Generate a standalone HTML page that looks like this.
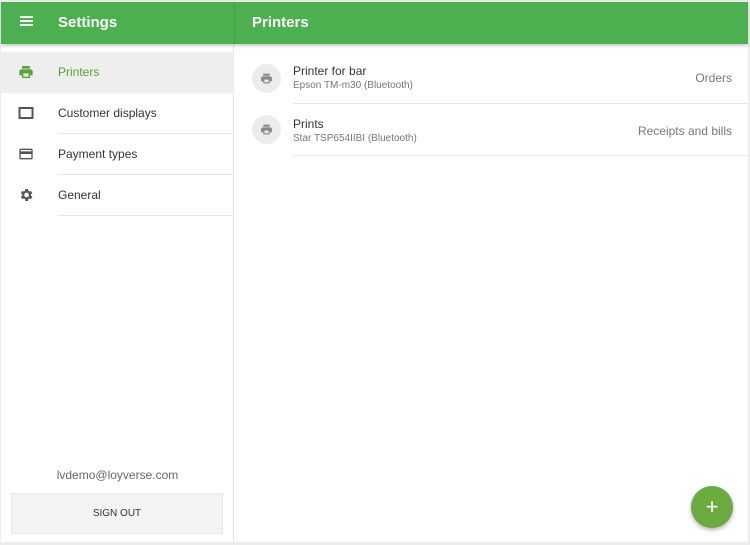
<!DOCTYPE html>
<html><head><meta charset="utf-8"><style>
*{margin:0;padding:0;box-sizing:border-box}
body{width:750px;height:545px;background:#ececec;font-family:"Liberation Sans",Arial,sans-serif;position:relative;overflow:hidden}
.frame{position:absolute;left:1px;top:2px;width:747px;height:540px;background:#fff}
.hdr{position:absolute;left:0;top:0;width:747px;height:42px;background:#4caf50;box-shadow:0 2px 3px rgba(0,0,0,.2);z-index:2;color:#fff;font-size:15px;font-weight:bold}
.side{position:absolute;left:0;top:42px;width:233px;height:498px;border-right:1px solid #e2e2e2}
.row{position:absolute;left:0;width:233px;height:41px;font-size:12px;color:#333}
.row span{position:absolute;left:57px;top:13px}
.row .line{position:absolute;left:57px;right:0;bottom:0;height:1px;background:#e6e6e6}
.row svg{position:absolute;left:17px;top:12px}
.item{position:absolute;left:234px;width:513px;height:52px}
.circ{position:absolute;left:17px;width:29px;height:29px;border-radius:50%;background:#ececec}
.t1{position:absolute;left:58px;font-size:12px;color:#333}
.t2{position:absolute;left:58px;font-size:10px;color:#777}
.rt{position:absolute;right:16px;font-size:12px;color:#777}
.sep{position:absolute;left:58px;right:0;height:1px;background:#e6e6e6}
</style></head><body>
<div class="frame">
<div class="hdr">
 <div style="position:absolute;left:19px;top:14px;width:13px;height:2px;background:#fff;box-shadow:0 4px 0 #fff,0 8px 0 #fff"></div>
 <div style="position:absolute;left:57px;top:12px">Settings</div>
 <div style="position:absolute;left:233px;top:0;width:1px;height:42px;background:rgba(0,0,0,.08)"></div>
 <div style="position:absolute;left:251px;top:12px">Printers</div>
</div>
<div class="side">
 <div class="row" style="top:8px;background:#eee;color:#5a9e3a"><svg width="16" height="16" viewBox="0 0 24 24"><path fill="#5aa33a" d="M19 8H5c-1.7 0-3 1.3-3 3v6h4v4h12v-4h4v-6c0-1.7-1.3-3-3-3zm-3 11H8v-5h8v5zm2-12V3H6v4z"/></svg><span>Printers</span></div>
 <div class="row" style="top:49px"><svg width="16" height="16" viewBox="0 0 16 16"><rect x="1.5" y="3" width="13" height="10" fill="none" stroke="#555" stroke-width="2"/></svg><span>Customer displays</span><div class="line"></div></div>
 <div class="row" style="top:90px"><svg width="16" height="16" viewBox="0 0 24 24"><path fill="#555" d="M20 4H4c-1.1 0-2 .9-2 2v12c0 1.1.9 2 2 2h16c1.1 0 2-.9 2-2V6c0-1.1-.9-2-2-2zm0 14H4v-6h16v6zm0-10H4V6h16v2z"/></svg><span>Payment types</span><div class="line"></div></div>
 <div class="row" style="top:131px"><svg width="16" height="16" viewBox="0 0 24 24"><path fill="#555" d="M19.4 13a7.5 7.5 0 000-2l2.1-1.6-2-3.5-2.5 1a7 7 0 00-1.7-1L14.9 3h-4l-.4 2.9a7 7 0 00-1.7 1l-2.5-1-2 3.5L6.5 11a7.5 7.5 0 000 2l-2.1 1.6 2 3.5 2.5-1a7 7 0 001.7 1l.4 2.9h4l.4-2.9a7 7 0 001.7-1l2.5 1 2-3.5zM12.9 15.5a3.5 3.5 0 110-7 3.5 3.5 0 010 7z"/></svg><span>General</span><div class="line"></div></div>
 <div style="position:absolute;left:0;width:233px;top:424px;text-align:center;font-size:12px;color:#666">lvdemo@loyverse.com</div>
 <div style="position:absolute;left:10px;top:449px;width:212px;height:41px;background:#f3f3f3;border:1px solid #e8e8e8;text-align:center;line-height:39px;font-size:10px;color:#333">SIGN OUT</div>
</div>
<div class="item" style="top:50px">
 <div class="circ" style="top:12px"><svg style="margin:8px" width="13" height="13" viewBox="0 0 24 24"><path fill="#888" d="M19 8H5c-1.7 0-3 1.3-3 3v6h4v4h12v-4h4v-6c0-1.7-1.3-3-3-3zm-3 11H8v-5h8v5zm2-12V3H6v4z"/></svg></div>
 <div class="t1" style="top:12px">Printer for bar</div>
 <div class="t2" style="top:28px">Epson TM-m30 (Bluetooth)</div>
 <div class="rt" style="top:19px">Orders</div>
 <div class="sep" style="top:51px"></div>
</div>
<div class="item" style="top:102px">
 <div class="circ" style="top:11px"><svg style="margin:8px" width="13" height="13" viewBox="0 0 24 24"><path fill="#888" d="M19 8H5c-1.7 0-3 1.3-3 3v6h4v4h12v-4h4v-6c0-1.7-1.3-3-3-3zm-3 11H8v-5h8v5zm2-12V3H6v4z"/></svg></div>
 <div class="t1" style="top:13px">Prints</div>
 <div class="t2" style="top:29px">Star TSP654IIBI (Bluetooth)</div>
 <div class="rt" style="top:20px">Receipts and bills</div>
 <div class="sep" style="top:51px"></div>
</div>
<div style="position:absolute;left:690px;top:484px;width:42px;height:42px;border-radius:50%;background:#6aab3e;box-shadow:0 2px 4px rgba(0,0,0,.3);color:#fff;font-size:22px;text-align:center;line-height:41px">+</div>
</div>
</body></html>
